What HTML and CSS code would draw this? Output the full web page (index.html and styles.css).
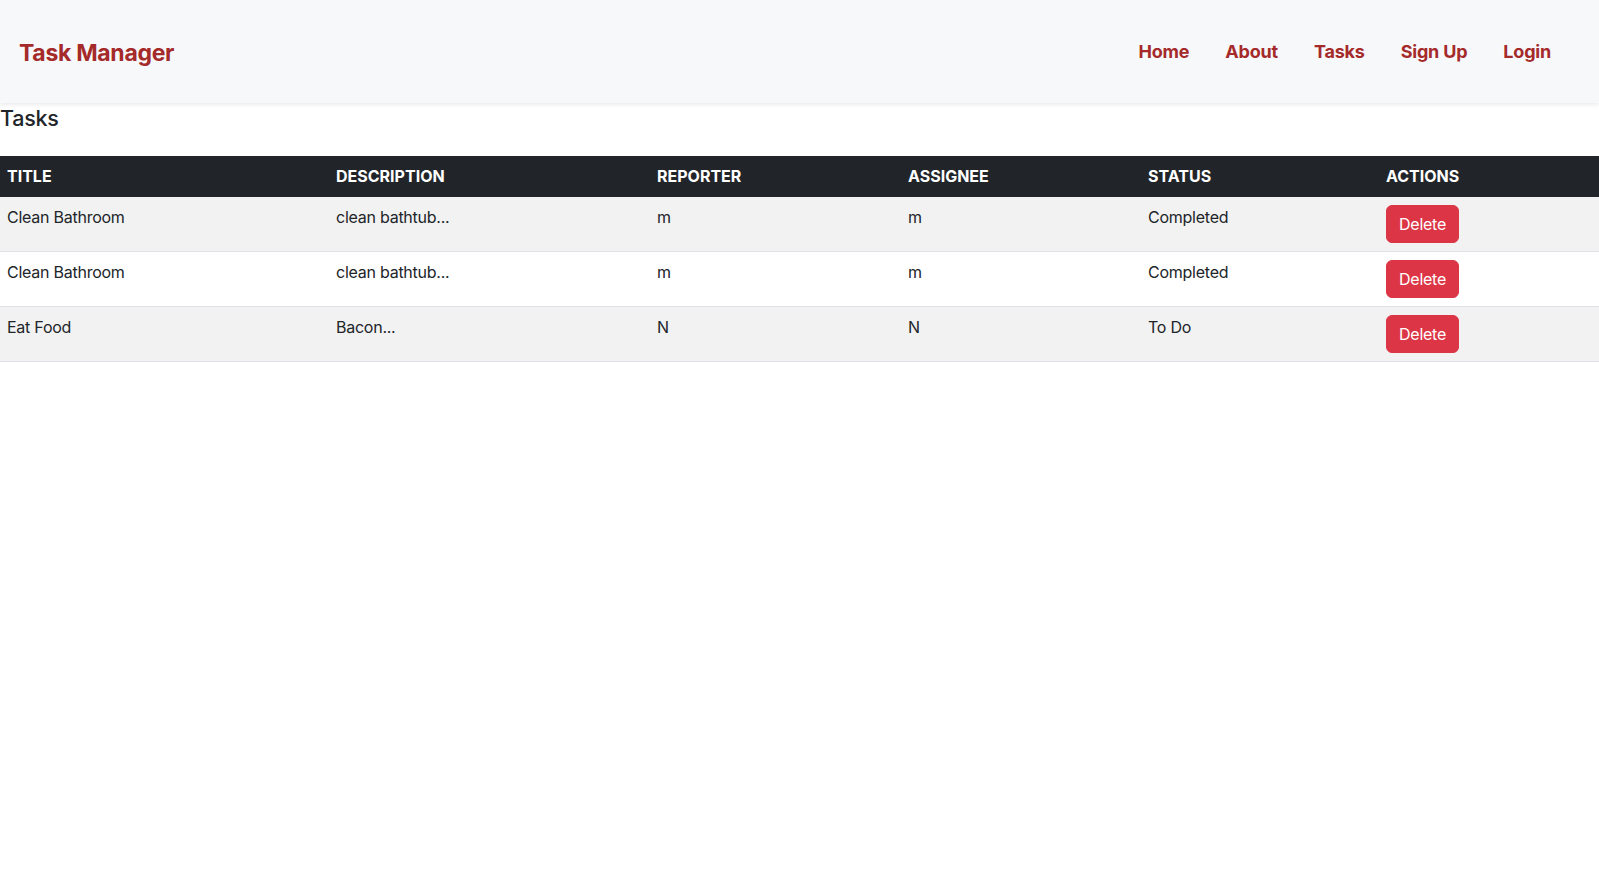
FILE: index.html
```html
<!DOCTYPE html>
<html lang="en">
<head>
<meta charset="utf-8">
<title>Task Manager</title>
<link rel="stylesheet" href="styles.css">
</head>
<body>
<header class="navbar">
  <a class="brand" href="#">Task Manager</a>
  <nav class="nav-links">
    <a href="#">Home</a>
    <a href="#">About</a>
    <a href="#">Tasks</a>
    <a href="#">Sign Up</a>
    <a href="#">Login</a>
  </nav>
</header>
<main>
  <h2 class="page-title">Tasks</h2>
  <table class="task-table">
    <thead>
      <tr>
        <th class="col-title">Title</th>
        <th class="col-desc">Description</th>
        <th class="col-rep">Reporter</th>
        <th class="col-asg">Assignee</th>
        <th class="col-status">Status</th>
        <th class="col-actions">Actions</th>
      </tr>
    </thead>
    <tbody>
      <tr>
        <td>Clean Bathroom</td>
        <td>clean bathtub...</td>
        <td>m</td>
        <td>m</td>
        <td>Completed</td>
        <td><button class="btn-danger">Delete</button></td>
      </tr>
      <tr>
        <td>Clean Bathroom</td>
        <td>clean bathtub...</td>
        <td>m</td>
        <td>m</td>
        <td>Completed</td>
        <td><button class="btn-danger">Delete</button></td>
      </tr>
      <tr>
        <td>Eat Food</td>
        <td>Bacon...</td>
        <td>N</td>
        <td>N</td>
        <td>To Do</td>
        <td><button class="btn-danger">Delete</button></td>
      </tr>
    </tbody>
  </table>
</main>
</body>
</html>
```

FILE: styles.css
```css
* { box-sizing: border-box; }

body {
  margin: 0;
  font-family: Inter, "Liberation Sans", sans-serif;
  font-size: 16px;
  line-height: 1.5;
  color: #212529;
  background: #fff;
  letter-spacing: -0.25px;
}

.navbar {
  height: 103px;
  background: #f7f8fa;
  box-shadow: 0 2px 4px rgba(0, 0, 0, 0.08);
  display: flex;
  align-items: center;
  justify-content: space-between;
  padding: 0 48px 0 19px;
  position: relative;
}

.brand {
  color: #a52a2a;
  font-weight: 700;
  font-size: 23px;
  text-decoration: none;
  letter-spacing: -0.3px;
  margin-top: 4px;
}

.nav-links {
  display: flex;
  gap: 36px;
  margin-top: 0;
}

.nav-links a {
  color: #a52a2a;
  font-weight: 700;
  font-size: 18px;
  text-decoration: none;
  letter-spacing: -0.2px;
}

.page-title {
  margin: 0 0 24px 0;
  padding-top: 3px;
  font-size: 21.5px;
  font-weight: 500;
  line-height: 1.2;
}

.task-table {
  width: 100%;
  border-collapse: collapse;
}

.task-table th,
.task-table td {
  text-align: left;
  padding: 8px 8px 8px 7px;
  vertical-align: top;
  border-bottom: 1px solid #dee2e6;
}

.task-table th {
  background: #212529;
  color: #fff;
  font-weight: 700;
  text-transform: uppercase;
  letter-spacing: 0;
  border-bottom-color: #212529;
}

.col-title { width: 329px; }
.col-desc { width: 321px; }
.col-rep { width: 251px; }
.col-asg { width: 240px; }
.col-status { width: 238px; }

.task-table tbody tr:nth-child(odd) td {
  background: #f2f2f2;
}

.task-table td {
  height: 55px;
}

.btn-danger {
  font-family: inherit;
  font-size: 16px;
  line-height: 1.5;
  letter-spacing: -0.25px;
  color: #fff;
  background: #dc3545;
  border: 1px solid #dc3545;
  border-radius: 6px;
  padding: 6px 12px;
  cursor: pointer;
}
```
